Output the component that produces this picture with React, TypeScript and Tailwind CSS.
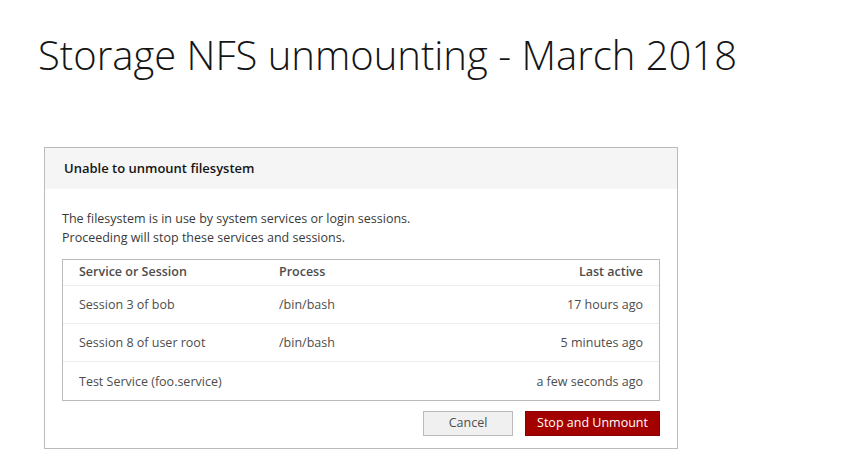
export default function App() {
  const rows = [
    { name: "Session 3 of bob", process: "/bin/bash", last: "17 hours ago" },
    { name: "Session 8 of user root", process: "/bin/bash", last: "5 minutes ago" },
    { name: "Test Service (foo.service)", process: "", last: "a few seconds ago" },
  ];

  return (
    <div className="w-[859px] h-[475px] bg-white overflow-hidden" style={{ fontFamily: '"Open Sans", sans-serif' }}>
      <h1 className="pl-[38px] pt-[27px] text-[40px] leading-[56px] font-light text-[#151515]">
        Storage NFS unmounting - March 2018
      </h1>

      <div className="ml-[44px] mt-[64px] w-[634px] border border-[#bbbbbb] bg-white">
        <div className="h-[41px] bg-[#f5f5f5] flex items-center pl-[19px]">
          <h2 className="text-[13px] font-semibold text-[#151515]">Unable to unmount filesystem</h2>
        </div>

        <div className="px-[17px] pt-[20px] pb-[12px]">
          <p className="text-[12.5px] leading-[19px] text-[#393939]">
            The filesystem is in use by system services or login sessions.
            <br />
            Proceeding will stop these services and sessions.
          </p>

          <div className="mt-[12px] border border-[#bbbbbb]">
            <div className="h-[26px] flex items-center px-[16px] text-[12.5px] font-semibold text-[#4d4d4d] border-b border-[#ededed]">
              <div className="w-[200px]">Service or Session</div>
              <div className="flex-1">Process</div>
              <div>Last active</div>
            </div>
            {rows.map((r, i) => (
              <div
                key={r.name}
                className={`h-[38px] flex items-center px-[16px] pt-[2px] text-[12.5px] text-[#4d4d4d] ${
                  i < rows.length - 1 ? "border-b border-[#ededed]" : ""
                }`}
              >
                <div className="w-[200px]">{r.name}</div>
                <div className="flex-1">{r.process}</div>
                <div>{r.last}</div>
              </div>
            ))}
          </div>

          <div className="flex justify-end gap-[12px] mt-[10px]">
            <button className="w-[90px] h-[25px] border border-[#bbbbbb] bg-[#f0f0f0] text-[12.5px] text-[#4d4d4d]">
              Cancel
            </button>
            <button className="w-[135px] h-[25px] border border-[#8b0000] bg-[#a30000] text-[12.5px] text-white">
              Stop and Unmount
            </button>
          </div>
        </div>
      </div>
    </div>
  );
}
